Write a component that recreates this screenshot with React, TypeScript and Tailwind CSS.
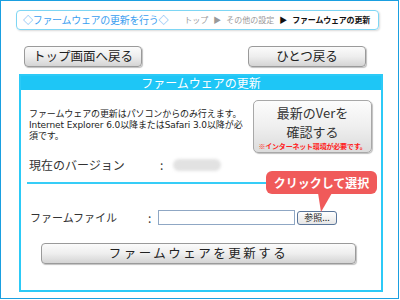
const jp = "font-['Noto_Sans_CJK_JP','Liberation_Sans',sans-serif]"

function GrayButton({ label, className }: { label: string; className: string }) {
  return (
    <button
      className={`flex items-center justify-center rounded-[4px] border border-[#9a9a9a] bg-gradient-to-b from-[#fbfbfb] via-[#eeeeee] to-[#d4d4d4] shadow-[1px_1px_1px_rgba(0,0,0,0.25)] text-[#222] ${className}`}
    >
      {label}
    </button>
  )
}

export default function App() {
  return (
    <div className={`${jp} relative w-[399px] h-[299px] border border-[#1a9fe0] bg-white overflow-hidden`}>
      {/* title bar */}
      <div className="mt-[9px] ml-[15px] w-[363px] h-[20px] rounded-[4px] border border-[#7ed6f4] shadow-[1px_1px_2px_rgba(0,0,0,0.15)] flex items-center justify-between pl-[6px] pr-[8px]">
        <span className="text-[10px] leading-none text-[#3a9ef0] tracking-[-0.3px]">◇ファームウェアの更新を行う◇</span>
        <span className="text-[8px] leading-none text-[#999] flex items-center gap-[5px]">
          <span>トップ</span>
          <span>▶</span>
          <span>その他の設定</span>
          <span className="text-[#111]">▶</span>
          <span className="text-[#111] font-bold tracking-[-0.2px]">ファームウェアの更新</span>
        </span>
      </div>

      {/* nav buttons */}
      <div className="mt-[16px] ml-[23px] w-[342px] flex justify-between">
        <GrayButton label="トップ画面へ戻る" className="w-[118px] h-[21px] text-[12.5px] leading-none" />
        <GrayButton label="ひとつ戻る" className="w-[118px] h-[21px] text-[12.5px] leading-none" />
      </div>

      {/* panel */}
      <div className="mt-[7px] ml-[18px] w-[364px] h-[218px] border-2 border-[#2ccaf7] flex flex-col">
        <div className="h-[14px] bg-[#1ec6f6] text-white text-[12px] leading-none flex items-center justify-center">
          ファームウェアの更新
        </div>

        <div className="h-[63px] flex items-start pl-[8px] pr-[9px] pt-[10px]">
          <div className="flex-1 pt-[9px]">
            <div className="h-[33px] font-['DejaVu_Sans','Noto_Sans_CJK_JP',sans-serif] text-[9px] text-[#222] tracking-[-0.1px] whitespace-nowrap">
              <div className="h-[11px] leading-[11px]">ファームウェアの更新はパソコンからのみ行えます。</div>
              <div className="h-[11px] leading-[11px]">Internet Explorer 6.0以降またはSafari 3.0以降が必</div>
              <div className="h-[11px] leading-[11px]">須です。</div>
            </div>
            <div className="mt-[17px] h-[12px] flex items-center text-[12px] leading-none text-[#333]">
              <span className="w-[131px]">現在のバージョン</span>
              <span className="w-[13px]">:</span>
              <span className="w-[48px] h-[12px] rounded-[6px] bg-[#e2e2e2] blur-[1.5px]" />
            </div>
          </div>
          <button className="w-[119px] h-[53px] rounded-[5px] border border-[#a8a8a8] bg-gradient-to-b from-[#fcfcfc] via-[#efefef] to-[#dcdcdc] shadow-[1px_1px_1px_rgba(0,0,0,0.25)] flex flex-col items-center pt-[2px]">
            <span className="h-[19px] text-[13px] leading-[19px] text-[#333]">最新のVerを</span>
            <span className="h-[19px] text-[13px] leading-[19px] text-[#333]">確認する</span>
            <span className="h-[10px] text-[7px] leading-[10px] text-[#ff2020] font-bold tracking-[-0.2px]">※インターネット環境が必要です。</span>
          </button>
        </div>

        <div className="mt-[29px] mx-[6px] h-[2px] bg-[#36cdf7]" />

        <div className="relative mt-[26px] h-[15px] flex items-center pl-[9px]">
          <span className="w-[118px] text-[11px] leading-none text-[#333]">ファームファイル</span>
          <span className="w-[10px] text-[12px] leading-none text-[#333]">:</span>
          <span className="w-[137px] h-[15px] border border-[#8fa7c4] bg-white" />
          <span className="ml-[2px] w-[40px] h-[14px] rounded-[3px] border border-[#5a7599] bg-gradient-to-b from-white to-[#e6e6e6] text-[9px] leading-none text-[#222] flex items-center justify-center">
            参照...
          </span>
          {/* callout */}
          <div className="absolute left-[245px] top-[-39px] w-[111px] h-[23px] rounded-[6px] bg-[#f05a5a] text-white font-bold text-[12px] leading-none flex items-center justify-center">
            クリックして選択
          </div>
          <svg className="absolute left-[290px] top-[-17px]" width="24" height="22" viewBox="0 0 24 22">
            <polygon points="7,0 21,0 10,19" fill="#f05a5a" />
          </svg>
        </div>

        <div className="mt-[18px] ml-[20px]">
          <GrayButton label="ファームウェアを更新する" className="w-[315px] h-[21px] text-[12.5px] leading-none tracking-[2.5px]" />
        </div>
      </div>
    </div>
  )
}
